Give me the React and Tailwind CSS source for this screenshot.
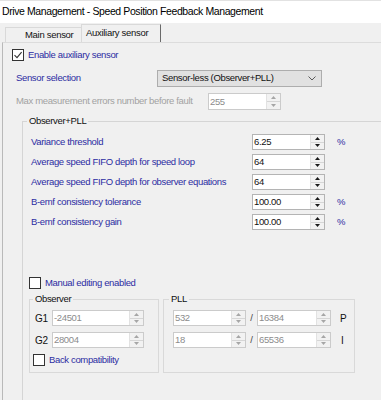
import React from "react";

const BLUE = "text-[#2c2ca2]";

function Arrow({up, disabled}) {
    const fill = disabled ? "#a6a6a6" : "#1a1a1a";
    return (
        <svg width="5" height="3" viewBox="0 0 5 3">
            {up ? <path d="M0 3L2.5 0L5 3Z" fill={fill}/> : <path d="M0 0L2.5 3L5 0Z" fill={fill}/>}
        </svg>
    );
}

function Spin({value, className, disabled}) {
    return (
        <div className={`flex h-[16px] bg-white border ${disabled ? "border-[#cbcbcb]" : "border-[#b4b4b4]"} ${className}`}>
            <div className={`flex-1 flex items-center pl-[1px] leading-none ${disabled ? "text-[#8c8c8c]" : "text-[#111]"}`}>
                {value}
            </div>
            <div className="w-[14px] flex flex-col bg-[#f2f2f2] border-l border-[#e2e2e2]">
                <div className="flex-1 flex items-center justify-center border-b border-[#d6d6d6]">
                    <Arrow up disabled={disabled}/>
                </div>
                <div className="flex-1 flex items-center justify-center">
                    <Arrow disabled={disabled}/>
                </div>
            </div>
        </div>
    );
}

function Check({checked}) {
    return (
        <div className="w-[12px] h-[12px] border border-[#333] bg-white flex items-center justify-center shrink-0">
            {checked && (
                <svg width="10" height="10" viewBox="0 0 10 10">
                    <path d="M1.5 5.2L4 7.7L8.6 2.2" fill="none" stroke="#333" strokeWidth="1.1"/>
                </svg>
            )}
        </div>
    );
}

export default function App() {
    const rows = [
        {label: "Variance threshold", value: "6.25", unit: "%"},
        {label: "Average speed FIFO depth for speed loop", value: "64", unit: ""},
        {label: "Average speed FIFO depth for observer equations", value: "64", unit: ""},
        {label: "B-emf consistency tolerance", value: "100.00", unit: "%"},
        {label: "B-emf consistency gain", value: "100.00", unit: "%"},
    ];

    return (
        <div className="w-[381px] h-[400px] overflow-hidden bg-[#f0f0f0] font-['Liberation_Sans',Arial,sans-serif] text-[9.5px] tracking-[-0.35px] text-[#111] whitespace-nowrap">
            {/* Title bar */}
            <div className="h-[23px] bg-white border-t border-[#e2e2e2] flex items-center pl-[2px] text-[10.5px] tracking-[-0.4px] text-black">
                Drive Management - Speed Position Feedback Management
            </div>

            {/* Tabs */}
            <div className="h-[19px] flex items-end pl-[5px] tracking-[-0.3px]">
                <div className="h-[15px] w-[76px] border-t border-l border-[#d9d9d9] flex items-center pl-[19px]">
                    Main sensor
                </div>
                <div className="h-[18px] w-[80px] border-t border-l border-[#d9d9d9] border-r border-r-[#6a6a6a] flex items-center pl-[4px] pb-[1px]">
                    Auxiliary sensor
                </div>
            </div>

            {/* Tab page */}
            <div className="ml-[2px] h-[358px] border-l border-t border-l-[#b9b9b9] border-t-[#dcdcdc] pt-[6px]">
                <div className="flex items-center h-[12px] pl-[9px] gap-[4px]">
                    <Check checked/>
                    <span className={BLUE}>Enable auxiliary sensor</span>
                </div>

                <div className="flex items-center h-[17px] mt-[9px] pl-[13px]">
                    <span className={`w-[141px] ${BLUE}`}>Sensor selection</span>
                    <div className="w-[165px] h-[17px] bg-[#e1e1e1] border border-[#adadad] flex items-center pl-[4px] pr-[5px]">
                        <span className="flex-1">Sensor-less (Observer+PLL)</span>
                        <svg width="8" height="5" viewBox="0 0 8 5">
                            <path d="M0.5 0.5L4 4L7.5 0.5" fill="none" stroke="#5a5a5a" strokeWidth="1"/>
                        </svg>
                    </div>
                </div>

                <div className="flex items-center h-[17px] mt-[6px] pl-[13px]">
                    <span className="w-[192px] text-[#a2a2a2]">Max measurement errors number before fault</span>
                    <Spin value="255" className="w-[73px] h-[17px]" disabled/>
                </div>

                {/* Observer+PLL group */}
                <fieldset className="mt-[5px] ml-[19px] w-[400px] h-[300px] border border-[#d5d5d5] pt-[5px]">
                    <legend className="ml-[4px] px-[2px] leading-[12px] text-[#111]">Observer+PLL</legend>

                    {rows.map((r) => (
                        <div key={r.label} className="flex items-center h-[20px] pl-[8px]">
                            <span className={`w-[221px] ${BLUE}`}>{r.label}</span>
                            <Spin value={r.value} className="w-[73px]"/>
                            <span className={`ml-[12px] ${BLUE}`}>{r.unit}</span>
                        </div>
                    ))}

                    <div className="flex items-center h-[12px] mt-[45px] pl-[6px] gap-[4px]">
                        <Check/>
                        <span className={BLUE}>Manual editing enabled</span>
                    </div>

                    <div className="flex mt-[4px] pl-[6px]">
                        <fieldset className="w-[130px] h-[80px] border border-[#d9d9d9] pt-[5px]">
                            <legend className="ml-[3px] px-[2px] leading-[12px]">Observer</legend>
                            <div className="flex items-center h-[16px] pl-[5px]">
                                <span className="w-[17px] text-[10px]">G1</span>
                                <Spin value="-24501" className="w-[92px]" disabled/>
                            </div>
                            <div className="flex items-center h-[16px] mt-[6px] pl-[5px]">
                                <span className="w-[17px] text-[10px]">G2</span>
                                <Spin value="28004" className="w-[92px]" disabled/>
                            </div>
                            <div className="flex items-center h-[12px] mt-[6px] pl-[3px] gap-[4px]">
                                <Check/>
                                <span className={BLUE}>Back compatibility</span>
                            </div>
                        </fieldset>

                        <fieldset className="ml-[4px] w-[192px] h-[80px] border border-[#d9d9d9] pt-[5px]">
                            <legend className="ml-[5px] px-[2px] leading-[12px]">PLL</legend>
                            <div className="flex items-center h-[16px] pl-[9px]">
                                <Spin value="532" className="w-[73px]" disabled/>
                                <span className="w-[11px] text-center text-[#444]">/</span>
                                <Spin value="16384" className="w-[74px]" disabled/>
                                <span className="ml-[9px] text-[10px]">P</span>
                            </div>
                            <div className="flex items-center h-[16px] mt-[6px] pl-[9px]">
                                <Spin value="18" className="w-[73px]" disabled/>
                                <span className="w-[11px] text-center text-[#444]">/</span>
                                <Spin value="65536" className="w-[74px]" disabled/>
                                <span className="ml-[10px] text-[10px]">I</span>
                            </div>
                        </fieldset>
                    </div>
                </fieldset>
            </div>
        </div>
    );
}
